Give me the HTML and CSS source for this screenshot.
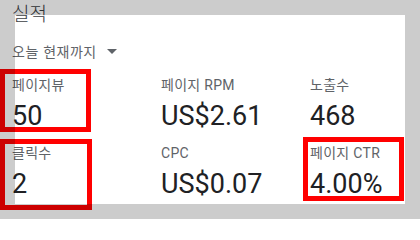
FILE: index.html
```html
<!DOCTYPE html>
<html lang="ko">
<head>
<meta charset="utf-8">
<link rel="stylesheet" href="styles.css">
</head>
<body>
<div class="screen">
  <section class="card">
    <h2 class="title">실적</h2>
    <div class="filter">
      <span class="filter-text">오늘 현재까지</span>
      <span class="caret"></span>
    </div>
    <div class="metrics">
      <div class="metric">
        <div class="label">페이지뷰</div>
        <div class="value">50</div>
      </div>
      <div class="metric">
        <div class="label">페이지 RPM</div>
        <div class="value">US$2.61</div>
      </div>
      <div class="metric">
        <div class="label">노출수</div>
        <div class="value">468</div>
      </div>
      <div class="metric">
        <div class="label">클릭수</div>
        <div class="value">2</div>
      </div>
      <div class="metric">
        <div class="label">CPC</div>
        <div class="value">US$0.07</div>
      </div>
      <div class="metric">
        <div class="label">페이지 CTR</div>
        <div class="value">4.00%</div>
      </div>
    </div>
  </section>
  <div class="mark mark-1"></div>
  <div class="mark mark-2"></div>
  <div class="mark mark-3"></div>
  <div class="spotlight"></div>
</div>
</body>
</html>
```

FILE: styles.css
```css
html, body {
  margin: 0;
  padding: 0;
  background: #ffffff;
}

.screen {
  position: relative;
  width: 420px;
  height: 219px;
  overflow: hidden;
  font-family: Roboto, "Noto Sans CJK KR", sans-serif;
}

.card {
  padding-left: 12px;
}

.title {
  margin: 0;
  font-family: "Noto Sans CJK KR", sans-serif;
  font-weight: 300;
  font-size: 19px;
  line-height: 26px;
  color: #3c4043;
}

.filter {
  margin-top: 15px;
  display: flex;
  align-items: center;
  gap: 10px;
  height: 20px;
}

.filter-text {
  font-family: "Noto Sans CJK KR", sans-serif;
  font-size: 14px;
  line-height: 20px;
  letter-spacing: 0.5px;
  color: #5f6368;
}

.caret {
  width: 0;
  height: 0;
  border-left: 5px solid transparent;
  border-right: 5px solid transparent;
  border-top: 5px solid #5f6368;
  margin-top: 1px;
}

.metrics {
  margin-top: 14px;
  display: grid;
  grid-template-columns: 149px 149px 149px;
  row-gap: 10px;
}

.metric {
  display: flex;
  flex-direction: column;
  gap: 4px;
}

.label {
  font-size: 14px;
  line-height: 20px;
  height: 20px;
  letter-spacing: 0.3px;
  color: #5f6368;
  white-space: nowrap;
}

.value {
  font-size: 27px;
  line-height: 34px;
  height: 34px;
  color: #202124;
  white-space: nowrap;
}

.mark {
  position: absolute;
  box-sizing: border-box;
  border: 5px solid #ff0000;
}

.mark-1 {
  left: 0;
  top: 69px;
  width: 91px;
  height: 63px;
}

.mark-2 {
  left: 0;
  top: 139px;
  width: 92px;
  height: 71px;
}

.mark-3 {
  left: 303px;
  top: 137px;
  width: 101px;
  height: 64px;
}

.spotlight {
  position: absolute;
  left: 15px;
  top: 15px;
  width: 390px;
  height: 189px;
  box-shadow: 0 0 0 600px rgba(0, 0, 0, 0.2);
  pointer-events: none;
}
```
